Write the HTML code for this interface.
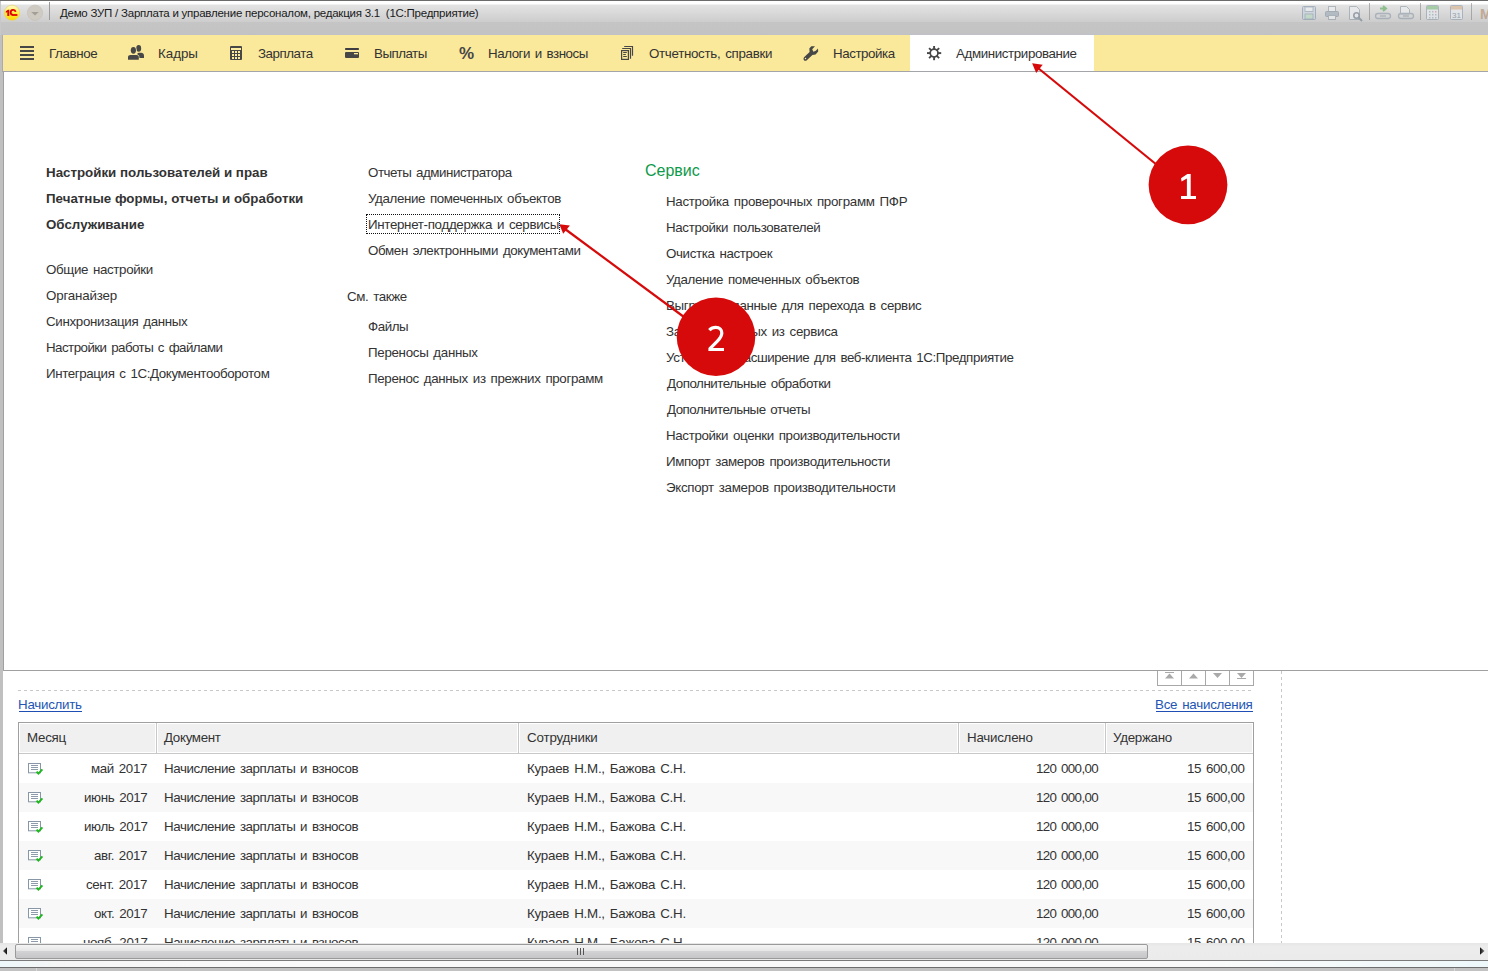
<!DOCTYPE html>
<html><head><meta charset="utf-8">
<style>
html,body{margin:0;padding:0;}
body{width:1488px;height:971px;overflow:hidden;position:relative;background:#fff;font-family:"Liberation Sans",sans-serif;color:#333;}
.a{position:absolute;}
.t{position:absolute;white-space:nowrap;line-height:16px;font-size:13.33px;color:#333;}
.b{position:absolute;white-space:nowrap;line-height:16px;font-size:13.33px;font-weight:bold;color:#333;}
svg{position:absolute;overflow:visible;}
</style></head>
<body>
<div class="a" style="left:0;top:0;width:1488px;height:22px;background:linear-gradient(#ffffff 0px,#ffffff 4px,#e3e3e3 5px,#cdcdcd 22px);"></div>
<div class="a" style="left:0;top:22px;width:1488px;height:13px;background:linear-gradient(#c5c5c5 0px,#c3c3c4 11px,#c0c1c8 13px);"></div>
<div class="a" style="left:0;top:0;width:1488px;height:1px;background:#6b6b6b;"></div>
<div class="a" style="left:0;top:1px;width:1px;height:34px;background:#c8c8c8;"></div>
<svg style="left:0;top:0" width="60" height="30">
<defs><linearGradient id="yg" x1="0" y1="0" x2="0" y2="1"><stop offset="0" stop-color="#fffbd0"/><stop offset="0.55" stop-color="#ffec3a"/><stop offset="1" stop-color="#ffd500"/></linearGradient></defs>
<circle cx="12" cy="12.75" r="7.6" fill="url(#yg)" stroke="#e9cf5a" stroke-width="0.6"/>
<path d="M5.8,11.3 L8,9.8 L9.3,9.8 L9.3,15.9 L7.3,15.9 L7.3,12.1 L5.8,12.9Z" fill="#e00000"/>
<path d="M15.6,11.9 A2.5,2.5 0 1 0 12.9,14.9" fill="none" stroke="#e00000" stroke-width="1.8"/>
<rect x="12.2" y="14.1" width="5.2" height="1.8" fill="#e00000"/>
<circle cx="35" cy="12.75" r="7.6" fill="#cfcbc3" stroke="#c4c0b8" stroke-width="0.7"/>
<path d="M31.2,12 L38.8,12 L35,15.6Z" fill="#a39f98"/>
<rect x="49" y="2" width="1" height="18" fill="#9a9a9a"/>
</svg>
<div class="a" style="left:60px;top:5px;white-space:nowrap;font-size:11.5px;line-height:16px;letter-spacing:-0.24px;color:#1a1a1a;">Демо ЗУП / Зарплата и управление персоналом, редакция 3.1&nbsp; (1С:Предприятие)</div>
<svg style="left:0;top:0" width="1488" height="30">
<g opacity="0.6">
<!-- save -->
<rect x="1302.5" y="6.5" width="13" height="13" rx="1" fill="#c9d3dd" stroke="#7f93a8"/>
<rect x="1305" y="7" width="8" height="4.5" fill="#eef2f5" stroke="#7f93a8" stroke-width="0.8"/>
<rect x="1305" y="14" width="8" height="5" fill="#b8dcc0" stroke="#7f93a8" stroke-width="0.8"/>
<!-- print -->
<rect x="1328.5" y="6.5" width="7" height="5" fill="#f2f2f2" stroke="#8d9aa8"/>
<rect x="1325.5" y="11.5" width="13" height="5" rx="1" fill="#9aa7b5" stroke="#7f8d9c"/>
<rect x="1328.5" y="15.5" width="7" height="4" fill="#f2f2f2" stroke="#8d9aa8"/>
<!-- preview -->
<path d="M1349.5,6.5 L1356.5,6.5 L1359.5,9.5 L1359.5,19.5 L1349.5,19.5Z" fill="#eef0f3" stroke="#8d9aa8"/>
<circle cx="1356.5" cy="15.5" r="2.7" fill="none" stroke="#6d7b8a" stroke-width="1.6"/>
<path d="M1358.5,17.5 L1362,21" stroke="#6d7b8a" stroke-width="1.8"/>
<rect x="1369" y="3" width="1" height="17" fill="#888"/>
<!-- link arrow -->
<path d="M1380,8.5 L1385,8.5 M1383,6 L1386,8.5 L1383,11" stroke="#5aa85a" stroke-width="2" fill="none"/>
<rect x="1375.5" y="13.5" width="15" height="5" rx="2.5" fill="none" stroke="#8d9aa8" stroke-width="1.3"/>
<path d="M1380,16 L1386,16" stroke="#8d9aa8" stroke-width="1.3"/>
<!-- link doc -->
<path d="M1400.5,6.5 L1406.5,6.5 L1409.5,9.5 L1409.5,14 L1400.5,14Z" fill="#eef0f3" stroke="#8d9aa8"/>
<rect x="1398.5" y="13.5" width="15" height="5" rx="2.5" fill="none" stroke="#8d9aa8" stroke-width="1.3"/>
<path d="M1403,16 L1409,16" stroke="#8d9aa8" stroke-width="1.3"/>
<rect x="1420" y="3" width="1" height="17" fill="#888"/>
<!-- calc -->
<rect x="1426.5" y="5.5" width="12" height="14" rx="1" fill="#e6ecf2" stroke="#8d9aa8"/>
<rect x="1427" y="6" width="11" height="3.5" fill="#7fc07f"/>
<g fill="#9aa7b5"><rect x="1429" y="11" width="1.5" height="1.5"/><rect x="1432" y="11" width="1.5" height="1.5"/><rect x="1435" y="11" width="1.5" height="1.5" fill="#d88"/><rect x="1429" y="14" width="1.5" height="1.5"/><rect x="1432" y="14" width="1.5" height="1.5"/><rect x="1435" y="14" width="1.5" height="1.5"/><rect x="1429" y="17" width="1.5" height="1.5"/><rect x="1432" y="17" width="1.5" height="1.5"/><rect x="1435" y="17" width="1.5" height="1.5"/></g>
<!-- calendar -->
<rect x="1450.5" y="5.5" width="12" height="14" rx="1" fill="#e6ecf2" stroke="#8d9aa8"/>
<rect x="1451" y="6" width="11" height="3.5" fill="#d9b08a"/>
<text x="1456.5" y="18" font-family="Liberation Sans" font-size="8" text-anchor="middle" fill="#6d7b8a">31</text>
<rect x="1471" y="3" width="1" height="17" fill="#888"/>
<text x="1480" y="18.5" font-family="Liberation Sans" font-weight="bold" font-size="14" fill="#b08a6a">M</text>
</g>
</svg>
<div class="a" style="left:0;top:35px;width:3px;height:908px;background:#c0c0c0;"></div>
<div class="a" style="left:2px;top:35px;width:1px;height:36px;background:#a9acb1;"></div>
<div class="a" style="left:3px;top:35px;width:1485px;height:36px;background:#fbe99b;"></div>
<div class="a" style="left:910px;top:35px;width:184px;height:36px;background:#fff;"></div>
<div class="a" style="left:2px;top:71px;width:1486px;height:1px;background:#a3a5a9;"></div>
<div class="t" style="left:49px;top:46px;letter-spacing:-0.367px;word-spacing:1.500px;">Главное</div>
<div class="t" style="left:158px;top:46px;letter-spacing:0.000px;word-spacing:1.500px;">Кадры</div>
<div class="t" style="left:258px;top:46px;letter-spacing:-0.464px;word-spacing:1.500px;">Зарплата</div>
<div class="t" style="left:374px;top:46px;letter-spacing:-0.500px;word-spacing:1.500px;">Выплаты</div>
<div class="t" style="left:488px;top:46px;letter-spacing:-0.446px;word-spacing:1.500px;">Налоги и взносы</div>
<div class="t" style="left:649px;top:46px;letter-spacing:-0.306px;word-spacing:1.500px;">Отчетность, справки</div>
<div class="t" style="left:833px;top:46px;letter-spacing:-0.438px;word-spacing:1.500px;">Настройка</div>
<div class="t" style="left:956px;top:46px;letter-spacing:-0.381px;word-spacing:1.500px;">Администрирование</div>
<svg style="left:0;top:0" width="1488" height="72">
<!-- hamburger -->
<g fill="#474747"><rect x="20" y="46" width="14" height="2"/><rect x="20" y="50" width="14" height="2"/><rect x="20" y="54" width="14" height="2"/><rect x="20" y="58" width="14" height="2"/></g>
<!-- people -->
<g fill="#474747">
<ellipse cx="138.7" cy="48.4" rx="2.45" ry="3.3"/>
<path d="M137.5,53.2 C139,52.6 141,52.6 142.3,53.1 C143.5,53.6 144,54.5 144,56 L144,58 L139,58 L137.5,55Z"/>
</g>
<g fill="#fbe99b" stroke="#fbe99b" stroke-width="1.2">
<ellipse cx="133.4" cy="50.35" rx="2.6" ry="3.35"/>
<path d="M128,57 C128,55.7 129,55 130.5,55 L136.5,55 C138,55 138.8,55.7 138.8,57 L138.8,59.8 L128,59.8Z"/>
</g>
<g fill="#474747">
<ellipse cx="133.4" cy="50.35" rx="2.6" ry="3.35"/>
<path d="M128,57 C128,55.7 129,55 130.5,55 L136.5,55 C138,55 138.8,55.7 138.8,57 L138.8,59.8 L128,59.8Z"/>
</g>
<!-- calculator -->
<rect x="230" y="46" width="12" height="14" rx="1" fill="#474747"/>
<g fill="#fbec9f"><rect x="231" y="48" width="10" height="2"/>
<rect x="232" y="51" width="2" height="2"/><rect x="235" y="51" width="2" height="2"/><rect x="238" y="51" width="2" height="2"/>
<rect x="232" y="54" width="2" height="2"/><rect x="235" y="54" width="2" height="2"/><rect x="238" y="54" width="2" height="2"/>
<rect x="232" y="57" width="2" height="2"/><rect x="235" y="57" width="2" height="2"/><rect x="238" y="57" width="2" height="2"/></g>
<!-- wallet -->
<rect x="345" y="48" width="14" height="2" rx="0.8" fill="#3d3d42"/>
<rect x="345" y="52" width="14" height="6" rx="1" fill="#474747"/>
<rect x="354" y="53" width="4" height="1.3" fill="#fbec9f"/>
<!-- docs -->
<g fill="none" stroke="#474747" stroke-width="1.2">
<rect x="621.6" y="50.6" width="6.8" height="8.8"/>
<path d="M622.2,48.5 L630.5,48.5 L630.5,58.8"/>
<path d="M624.2,46.5 L632.5,46.5 L632.5,55.8"/>
<path d="M623.2,52.5 L626.8,52.5 M623.2,54.5 L625.8,54.5 M623.2,56.5 L626.8,56.5"/>
</g>
<!-- wrench -->
<g fill="#474747">
<path d="M809.3,48.6 L811.3,46.3 L815,46.3 L812.2,49.3 L813.4,51.8 L815.8,50.8 L818,48.6 L818.2,51.6 L815.6,54.6 L812.4,55 L806.8,60.2 C805.6,61.2 803.8,60.8 803.6,59.2 C803.4,58.4 803.8,57.6 804.3,57.1 L809.6,52.1Z"/>
</g>
<circle cx="805.5" cy="58.4" r="0.75" fill="#fbec9f"/>
<!-- gear -->
<g fill="#474747" transform="translate(934.1,53.1)">
<circle r="3.9" fill="none" stroke="#474747" stroke-width="1.7"/>
<rect x="-0.95" y="-7.1" width="1.9" height="3.6"/>
<rect x="-0.95" y="-7.1" width="1.9" height="3.6" transform="rotate(45)"/>
<rect x="-0.95" y="-7.1" width="1.9" height="3.6" transform="rotate(90)"/>
<rect x="-0.95" y="-7.1" width="1.9" height="3.6" transform="rotate(135)"/>
<rect x="-0.95" y="-7.1" width="1.9" height="3.6" transform="rotate(180)"/>
<rect x="-0.95" y="-7.1" width="1.9" height="3.6" transform="rotate(225)"/>
<rect x="-0.95" y="-7.1" width="1.9" height="3.6" transform="rotate(270)"/>
<rect x="-0.95" y="-7.1" width="1.9" height="3.6" transform="rotate(315)"/>
</g>
<text x="459" y="59" font-family="Liberation Sans" font-weight="bold" font-size="17" fill="#474747">%</text>
</svg>
<div class="a" style="left:3px;top:72px;width:1px;height:599px;background:#a0a0a0;"></div>
<div class="a" style="left:3px;top:670px;width:1485px;height:1px;background:#a0a0a0;"></div>
<div class="b" style="left:46px;top:165px;letter-spacing:0.000px;word-spacing:0.000px;">Настройки пользователей и прав</div>
<div class="b" style="left:46px;top:191px;letter-spacing:0.000px;word-spacing:0.000px;">Печатные формы, отчеты и обработки</div>
<div class="b" style="left:46px;top:217px;letter-spacing:0.000px;word-spacing:0.000px;">Обслуживание</div>
<div class="t" style="left:46px;top:262px;letter-spacing:-0.350px;word-spacing:1.500px;">Общие настройки</div>
<div class="t" style="left:46px;top:288px;letter-spacing:-0.167px;word-spacing:1.500px;">Органайзер</div>
<div class="t" style="left:46px;top:314px;letter-spacing:-0.326px;word-spacing:1.500px;">Синхронизация данных</div>
<div class="t" style="left:46px;top:340px;letter-spacing:-0.540px;word-spacing:1.500px;">Настройки работы с файлами</div>
<div class="t" style="left:46px;top:366px;letter-spacing:-0.381px;word-spacing:1.500px;">Интеграция с 1С:Документооборотом</div>
<div class="t" style="left:368px;top:165px;letter-spacing:-0.460px;word-spacing:1.500px;">Отчеты администратора</div>
<div class="t" style="left:368px;top:191px;letter-spacing:-0.370px;word-spacing:1.500px;">Удаление помеченных объектов</div>
<div class="t" style="left:368px;top:217px;letter-spacing:-0.319px;word-spacing:1.500px;">Интернет-поддержка и сервисы</div>
<div class="t" style="left:368px;top:243px;letter-spacing:-0.352px;word-spacing:1.500px;">Обмен электронными документами</div>
<div class="t" style="left:347px;top:289px;letter-spacing:-0.375px;word-spacing:1.500px;">См. также</div>
<div class="t" style="left:368px;top:319px;letter-spacing:-0.425px;word-spacing:1.500px;">Файлы</div>
<div class="t" style="left:368px;top:345px;letter-spacing:-0.300px;word-spacing:1.500px;">Переносы данных</div>
<div class="t" style="left:368px;top:371px;letter-spacing:-0.333px;word-spacing:1.500px;">Перенос данных из прежних программ</div>
<div class="a" style="left:366px;top:214px;width:192px;height:18px;border:1px dotted #111;"></div>
<div class="a" style="left:645px;top:161px;white-space:nowrap;font-size:16px;line-height:20px;color:#0d9a4a;">Сервис</div>
<div class="t" style="left:666px;top:194px;letter-spacing:-0.297px;word-spacing:1.500px;">Настройка проверочных программ ПФР</div>
<div class="t" style="left:666px;top:220px;letter-spacing:-0.355px;word-spacing:1.500px;">Настройки пользователей</div>
<div class="t" style="left:666px;top:246px;letter-spacing:-0.360px;word-spacing:1.500px;">Очистка настроек</div>
<div class="t" style="left:666px;top:272px;letter-spacing:-0.359px;word-spacing:1.500px;">Удаление помеченных объектов</div>
<div class="t" style="left:666px;top:298px;letter-spacing:-0.314px;word-spacing:1.500px;">Выгрузить данные для перехода в сервис</div>
<div class="t" style="left:666px;top:324px;letter-spacing:-0.296px;word-spacing:1.500px;">Загрузка данных из сервиса</div>
<div class="t" style="left:666px;top:350px;letter-spacing:-0.408px;word-spacing:1.500px;">Установить расширение для веб-клиента 1С:Предприятие</div>
<div class="t" style="left:667px;top:376px;letter-spacing:-0.465px;word-spacing:1.500px;">Дополнительные обработки</div>
<div class="t" style="left:667px;top:402px;letter-spacing:-0.495px;word-spacing:1.500px;">Дополнительные отчеты</div>
<div class="t" style="left:666px;top:428px;letter-spacing:-0.353px;word-spacing:1.500px;">Настройки оценки производительности</div>
<div class="t" style="left:666px;top:454px;letter-spacing:-0.375px;word-spacing:1.500px;">Импорт замеров производительности</div>
<div class="t" style="left:666px;top:480px;letter-spacing:-0.309px;word-spacing:1.500px;">Экспорт замеров производительности</div>
<svg style="left:0;top:0" width="1488" height="971"><line x1="1281.5" y1="671" x2="1281.5" y2="943" stroke="#c8c8c8" stroke-dasharray="3,3"/><line x1="18" y1="690.5" x2="1252" y2="690.5" stroke="#c8c8c8" stroke-dasharray="3,3"/></svg>
<div class="a" style="left:1157px;top:671px;width:95px;height:14px;border:1px solid #a8a8a8;border-top:none;background:#fff;"></div>
<div class="a" style="left:1181px;top:671px;width:1px;height:15px;background:#a8a8a8;"></div>
<div class="a" style="left:1205px;top:671px;width:1px;height:15px;background:#a8a8a8;"></div>
<div class="a" style="left:1229px;top:671px;width:1px;height:15px;background:#a8a8a8;"></div>
<svg style="left:0;top:0" width="1488" height="971"><g fill="#a9a9a9">
<rect x="1165" y="672" width="9" height="1"/><path d="M1165,678.5 L1174,678.5 L1169.5,673.5Z"/>
<path d="M1189,678.5 L1198,678.5 L1193.5,673.5Z"/>
<path d="M1213,673 L1222,673 L1217.5,678Z"/>
<path d="M1237,673 L1246,673 L1241.5,678Z"/><rect x="1237" y="678" width="9" height="1"/>
</g></svg>
<div class="t" style="left:18px;top:697px;letter-spacing:-0.250px;word-spacing:1.500px;color:#2356b4;">Начислить</div>
<div class="a" style="left:19px;top:711px;width:63px;height:1px;background:#1f4fb5;"></div>
<div class="t" style="left:1155px;top:697px;letter-spacing:-0.238px;word-spacing:1.500px;color:#2356b4;">Все начисления</div>
<div class="a" style="left:1156px;top:711px;width:97px;height:1px;background:#1f4fb5;"></div>
<div class="a" style="left:18px;top:722px;width:1234px;height:221px;border:1px solid #a0a0a0;border-bottom:none;background:#fff;overflow:hidden;"></div>
<div class="a" style="left:19px;top:723px;width:1234px;height:30px;background:#f0f0f0;box-shadow:inset 0 0 0 1px #fff;"></div>
<div class="a" style="left:19px;top:753px;width:1234px;height:1px;background:#c8c8c8;"></div>
<div class="a" style="left:156px;top:723px;width:1px;height:30px;background:#c8c8c8;"></div>
<div class="a" style="left:155px;top:723px;width:1px;height:30px;background:#fff;"></div>
<div class="a" style="left:157px;top:723px;width:1px;height:30px;background:#fff;"></div>
<div class="a" style="left:518px;top:723px;width:1px;height:30px;background:#c8c8c8;"></div>
<div class="a" style="left:517px;top:723px;width:1px;height:30px;background:#fff;"></div>
<div class="a" style="left:519px;top:723px;width:1px;height:30px;background:#fff;"></div>
<div class="a" style="left:958px;top:723px;width:1px;height:30px;background:#c8c8c8;"></div>
<div class="a" style="left:957px;top:723px;width:1px;height:30px;background:#fff;"></div>
<div class="a" style="left:959px;top:723px;width:1px;height:30px;background:#fff;"></div>
<div class="a" style="left:1105px;top:723px;width:1px;height:30px;background:#c8c8c8;"></div>
<div class="a" style="left:1104px;top:723px;width:1px;height:30px;background:#fff;"></div>
<div class="a" style="left:1106px;top:723px;width:1px;height:30px;background:#fff;"></div>
<div class="t" style="left:27px;top:730px;letter-spacing:-0.250px;word-spacing:1.500px;">Месяц</div>
<div class="t" style="left:164px;top:730px;letter-spacing:-0.314px;word-spacing:1.500px;">Документ</div>
<div class="t" style="left:527px;top:730px;letter-spacing:-0.156px;word-spacing:1.500px;">Сотрудники</div>
<div class="t" style="left:967px;top:730px;letter-spacing:-0.238px;word-spacing:1.500px;">Начислено</div>
<div class="t" style="left:1113px;top:730px;letter-spacing:-0.271px;word-spacing:1.500px;">Удержано</div>
<div class="a" style="left:19px;top:754px;width:1234px;height:189px;overflow:hidden;">
<div class="a" style="left:0;top:0px;width:1234px;height:29px;background:#ffffff;"></div>
<svg style="left:9px;top:9px" width="16" height="13"><rect x="0.5" y="0.5" width="12" height="9.3" fill="#fff" stroke="#8797a8"/><path d="M3,2.5 L10,2.5 M3,4.5 L10,4.5 M3,6.5 L10,6.5" stroke="#8d9bab"/><path d="M8.6,8.6 L10.4,10.6 L14.4,6.4" fill="none" stroke="#1fb81f" stroke-width="2"/></svg>
<div class="a" style="left:0;top:29px;width:1234px;height:29px;background:#f8f8f8;"></div>
<svg style="left:9px;top:38px" width="16" height="13"><rect x="0.5" y="0.5" width="12" height="9.3" fill="#fff" stroke="#8797a8"/><path d="M3,2.5 L10,2.5 M3,4.5 L10,4.5 M3,6.5 L10,6.5" stroke="#8d9bab"/><path d="M8.6,8.6 L10.4,10.6 L14.4,6.4" fill="none" stroke="#1fb81f" stroke-width="2"/></svg>
<div class="a" style="left:0;top:58px;width:1234px;height:29px;background:#ffffff;"></div>
<svg style="left:9px;top:67px" width="16" height="13"><rect x="0.5" y="0.5" width="12" height="9.3" fill="#fff" stroke="#8797a8"/><path d="M3,2.5 L10,2.5 M3,4.5 L10,4.5 M3,6.5 L10,6.5" stroke="#8d9bab"/><path d="M8.6,8.6 L10.4,10.6 L14.4,6.4" fill="none" stroke="#1fb81f" stroke-width="2"/></svg>
<div class="a" style="left:0;top:87px;width:1234px;height:29px;background:#f8f8f8;"></div>
<svg style="left:9px;top:96px" width="16" height="13"><rect x="0.5" y="0.5" width="12" height="9.3" fill="#fff" stroke="#8797a8"/><path d="M3,2.5 L10,2.5 M3,4.5 L10,4.5 M3,6.5 L10,6.5" stroke="#8d9bab"/><path d="M8.6,8.6 L10.4,10.6 L14.4,6.4" fill="none" stroke="#1fb81f" stroke-width="2"/></svg>
<div class="a" style="left:0;top:116px;width:1234px;height:29px;background:#ffffff;"></div>
<svg style="left:9px;top:125px" width="16" height="13"><rect x="0.5" y="0.5" width="12" height="9.3" fill="#fff" stroke="#8797a8"/><path d="M3,2.5 L10,2.5 M3,4.5 L10,4.5 M3,6.5 L10,6.5" stroke="#8d9bab"/><path d="M8.6,8.6 L10.4,10.6 L14.4,6.4" fill="none" stroke="#1fb81f" stroke-width="2"/></svg>
<div class="a" style="left:0;top:145px;width:1234px;height:29px;background:#f8f8f8;"></div>
<svg style="left:9px;top:154px" width="16" height="13"><rect x="0.5" y="0.5" width="12" height="9.3" fill="#fff" stroke="#8797a8"/><path d="M3,2.5 L10,2.5 M3,4.5 L10,4.5 M3,6.5 L10,6.5" stroke="#8d9bab"/><path d="M8.6,8.6 L10.4,10.6 L14.4,6.4" fill="none" stroke="#1fb81f" stroke-width="2"/></svg>
<div class="a" style="left:0;top:174px;width:1234px;height:29px;background:#ffffff;"></div>
<svg style="left:9px;top:183px" width="16" height="13"><rect x="0.5" y="0.5" width="12" height="9.3" fill="#fff" stroke="#8797a8"/><path d="M3,2.5 L10,2.5 M3,4.5 L10,4.5 M3,6.5 L10,6.5" stroke="#8d9bab"/><path d="M8.6,8.6 L10.4,10.6 L14.4,6.4" fill="none" stroke="#1fb81f" stroke-width="2"/></svg>
</div>
<div class="a" style="left:0;top:0;width:1488px;height:943px;overflow:hidden;">
<div class="t" style="left:91px;top:761px;letter-spacing:-0.360px;word-spacing:1.500px;">май 2017</div>
<div class="t" style="left:164px;top:761px;letter-spacing:-0.411px;word-spacing:1.500px;">Начисление зарплаты и взносов</div>
<div class="t" style="left:527px;top:761px;letter-spacing:-0.235px;word-spacing:1.500px;">Кураев Н.М., Бажова С.Н.</div>
<div class="t" style="left:1036px;top:761px;letter-spacing:-0.611px;word-spacing:1.500px;">120 000,00</div>
<div class="t" style="left:1187px;top:761px;letter-spacing:-0.360px;word-spacing:1.500px;">15 600,00</div>
<div class="t" style="left:84px;top:790px;letter-spacing:-0.360px;word-spacing:1.500px;">июнь 2017</div>
<div class="t" style="left:164px;top:790px;letter-spacing:-0.411px;word-spacing:1.500px;">Начисление зарплаты и взносов</div>
<div class="t" style="left:527px;top:790px;letter-spacing:-0.235px;word-spacing:1.500px;">Кураев Н.М., Бажова С.Н.</div>
<div class="t" style="left:1036px;top:790px;letter-spacing:-0.611px;word-spacing:1.500px;">120 000,00</div>
<div class="t" style="left:1187px;top:790px;letter-spacing:-0.360px;word-spacing:1.500px;">15 600,00</div>
<div class="t" style="left:84px;top:819px;letter-spacing:-0.360px;word-spacing:1.500px;">июль 2017</div>
<div class="t" style="left:164px;top:819px;letter-spacing:-0.411px;word-spacing:1.500px;">Начисление зарплаты и взносов</div>
<div class="t" style="left:527px;top:819px;letter-spacing:-0.235px;word-spacing:1.500px;">Кураев Н.М., Бажова С.Н.</div>
<div class="t" style="left:1036px;top:819px;letter-spacing:-0.611px;word-spacing:1.500px;">120 000,00</div>
<div class="t" style="left:1187px;top:819px;letter-spacing:-0.360px;word-spacing:1.500px;">15 600,00</div>
<div class="t" style="left:94px;top:848px;letter-spacing:-0.360px;word-spacing:1.500px;">авг. 2017</div>
<div class="t" style="left:164px;top:848px;letter-spacing:-0.411px;word-spacing:1.500px;">Начисление зарплаты и взносов</div>
<div class="t" style="left:527px;top:848px;letter-spacing:-0.235px;word-spacing:1.500px;">Кураев Н.М., Бажова С.Н.</div>
<div class="t" style="left:1036px;top:848px;letter-spacing:-0.611px;word-spacing:1.500px;">120 000,00</div>
<div class="t" style="left:1187px;top:848px;letter-spacing:-0.360px;word-spacing:1.500px;">15 600,00</div>
<div class="t" style="left:86px;top:877px;letter-spacing:-0.360px;word-spacing:1.500px;">сент. 2017</div>
<div class="t" style="left:164px;top:877px;letter-spacing:-0.411px;word-spacing:1.500px;">Начисление зарплаты и взносов</div>
<div class="t" style="left:527px;top:877px;letter-spacing:-0.235px;word-spacing:1.500px;">Кураев Н.М., Бажова С.Н.</div>
<div class="t" style="left:1036px;top:877px;letter-spacing:-0.611px;word-spacing:1.500px;">120 000,00</div>
<div class="t" style="left:1187px;top:877px;letter-spacing:-0.360px;word-spacing:1.500px;">15 600,00</div>
<div class="t" style="left:94px;top:906px;letter-spacing:-0.360px;word-spacing:1.500px;">окт. 2017</div>
<div class="t" style="left:164px;top:906px;letter-spacing:-0.411px;word-spacing:1.500px;">Начисление зарплаты и взносов</div>
<div class="t" style="left:527px;top:906px;letter-spacing:-0.235px;word-spacing:1.500px;">Кураев Н.М., Бажова С.Н.</div>
<div class="t" style="left:1036px;top:906px;letter-spacing:-0.611px;word-spacing:1.500px;">120 000,00</div>
<div class="t" style="left:1187px;top:906px;letter-spacing:-0.360px;word-spacing:1.500px;">15 600,00</div>
<div class="t" style="left:83px;top:935px;letter-spacing:-0.360px;word-spacing:1.500px;">нояб. 2017</div>
<div class="t" style="left:164px;top:935px;letter-spacing:-0.411px;word-spacing:1.500px;">Начисление зарплаты и взносов</div>
<div class="t" style="left:527px;top:935px;letter-spacing:-0.235px;word-spacing:1.500px;">Кураев Н.М., Бажова С.Н.</div>
<div class="t" style="left:1036px;top:935px;letter-spacing:-0.611px;word-spacing:1.500px;">120 000,00</div>
<div class="t" style="left:1187px;top:935px;letter-spacing:-0.360px;word-spacing:1.500px;">15 600,00</div>
</div>
<div class="a" style="left:0;top:943px;width:1488px;height:17px;background:linear-gradient(#e6e6e6,#ececec 20%,#ebebeb);"></div>
<div class="a" style="left:15px;top:944px;width:1131px;height:13px;border:1px solid #9a9a9a;border-radius:2px;background:linear-gradient(#f4f4f4 0%,#e6e6e6 45%,#d2d2d4 50%,#c6c6c8 100%);"></div>
<svg style="left:0;top:0" width="1488" height="971">
<defs><linearGradient id="ar" x1="0" y1="0" x2="1" y2="0"><stop offset="0" stop-color="#111"/><stop offset="1" stop-color="#777"/></linearGradient>
<linearGradient id="al" x1="1" y1="0" x2="0" y2="0"><stop offset="0" stop-color="#111"/><stop offset="1" stop-color="#555"/></linearGradient></defs>
<path d="M3,951 L7,947.3 L7,954.7Z" fill="url(#al)"/>
<path d="M1484.5,951 L1480,947.3 L1480,954.7Z" fill="url(#ar)"/>
<g stroke="#555" stroke-width="1"><line x1="577.5" y1="948" x2="577.5" y2="955"/><line x1="580.5" y1="948" x2="580.5" y2="955"/><line x1="583.5" y1="948" x2="583.5" y2="955"/></g>
</svg>
<div class="a" style="left:0;top:960px;width:1488px;height:1px;background:#7a7a7a;"></div>
<div class="a" style="left:0;top:961px;width:1488px;height:6px;background:linear-gradient(90deg,#eef8fa 0px,#f6f6f6 60px,#fafafa 300px,#fafafa 1200px,#eef8fa 1488px);"></div>
<div class="a" style="left:0;top:967px;width:1488px;height:1px;background:#6e6e6e;"></div>
<div class="a" style="left:0;top:968px;width:1488px;height:3px;background:#c2c2c2;"></div>
<div class="a" style="left:36px;top:968px;width:1px;height:3px;background:#d8d8d8;"></div>
<div class="a" style="left:1454px;top:968px;width:1px;height:3px;background:#d8d8d8;"></div>
<svg style="left:0;top:0" width="1488" height="971">
<g stroke="#d60a0a" stroke-width="2.2" fill="none"><line x1="1157" y1="165" x2="1038" y2="68"/><line x1="684" y1="317" x2="565" y2="229"/></g>
<g fill="#d60a0a">
<path d="M1032.1,63.2 L1042.7,64.7 L1036.2,73.1Z"/>
<path d="M559.3,224.3 L569.9,225.4 L563.2,233.8Z"/>
<circle cx="1188" cy="184.8" r="39.4"/>
<circle cx="716" cy="336.7" r="39.3"/>
</g>
<path d="M1181,178.2 L1187.4,173.9 L1190.7,173.9 L1190.7,195.9 L1196,195.9 L1196,199 L1181,199 L1181,195.9 L1186.9,195.9 L1186.9,178.6 L1181.6,181.6Z" fill="#fff"/>
<g fill="none" stroke="#fff" stroke-width="3.4">

<path d="M709.3,330.2 C711.2,328.2 713.5,327.4 715.8,327.4 C719.4,327.4 721.8,329.6 721.8,333 C721.8,336 720.2,338.3 717.4,341.2 L710,348.6 L710,349.5 L724,349.5" stroke-width="3.2"/>
</g>
</svg>
</body></html>
